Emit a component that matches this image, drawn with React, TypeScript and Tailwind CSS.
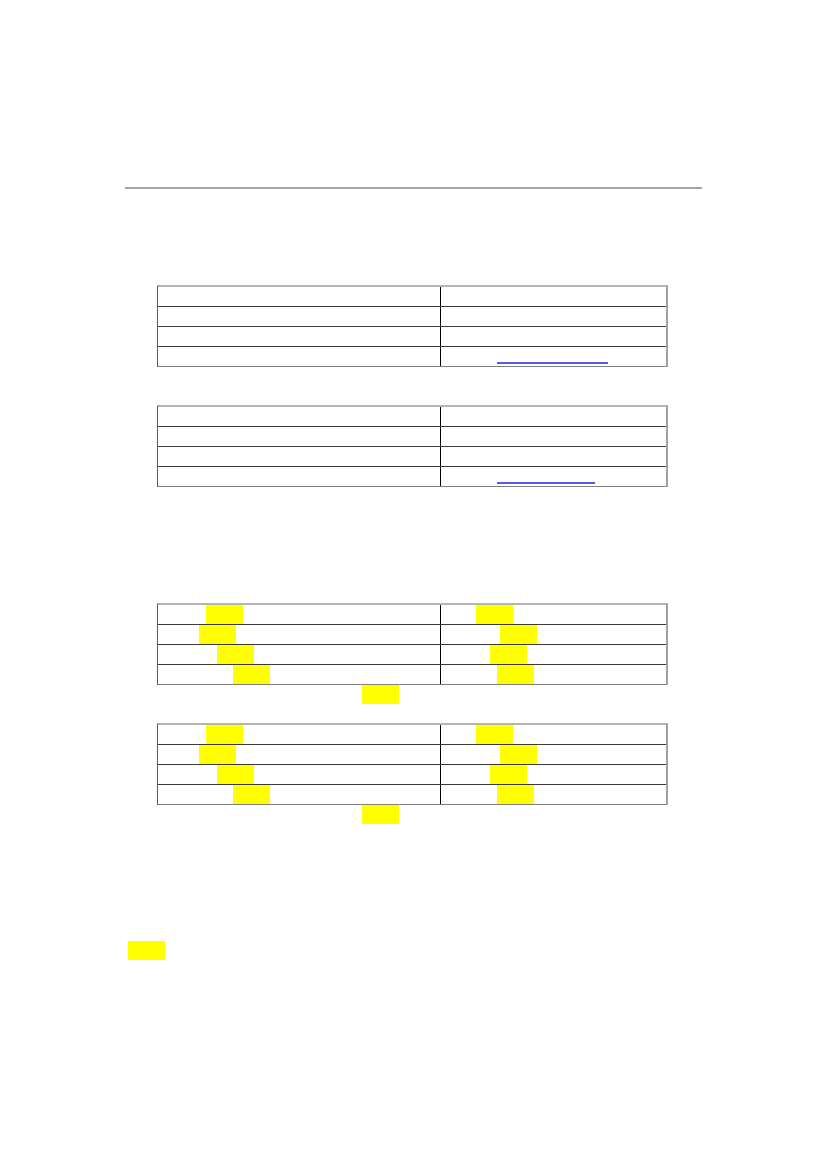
import React from "react";

type Row = { l?: number; r?: number; link?: number };

function Table({ rows }: { rows: Row[] }) {
  return (
    <div className="w-[511px] border-t-2 border-t-[#b4b4b4] border-l border-l-[#5a5a5a] border-r-2 border-r-[#a0a0a0]">
      {rows.map((row, i) => (
        <div
          key={i}
          className={
            "flex h-[20px] border-b " +
            (i < rows.length - 1 ? "border-b-[#3a3a3a]" : "border-b-[#808080]")
          }
        >
          <div className="flex w-[283px] border-r border-r-black">
            {row.l !== undefined && (
              <div className="h-full w-[37px] bg-[#ffff00]" style={{ marginLeft: row.l }} />
            )}
          </div>
          <div className="flex flex-1">
            {row.r !== undefined && (
              <div className="h-full w-[37px] bg-[#ffff00]" style={{ marginLeft: row.r }} />
            )}
            {row.link !== undefined && (
              <div
                className="mt-auto mb-[2px] ml-[56px] h-[2px] bg-[#5a5af0]"
                style={{ width: row.link }}
              />
            )}
          </div>
        </div>
      ))}
    </div>
  );
}

export default function App() {
  const hl: Row[] = [
    { l: 48, r: 35 },
    { l: 41, r: 59 },
    { l: 59, r: 49 },
    { l: 75, r: 56 },
  ];
  return (
    <div className="min-h-[1169px] w-[826px] bg-white font-['Liberation_Sans',sans-serif]">
      <div className="h-[187px]" />
      <div className="ml-[125px] h-[2px] w-[577px] bg-[#a4a4a4]" />
      <div className="ml-[157px]">
        <div className="h-[96px]" />
        <Table rows={[{}, {}, {}, { link: 111 }]} />
        <div className="h-[38px]" />
        <Table rows={[{}, {}, {}, { link: 98 }]} />
        <div className="h-[116px]" />
        <Table rows={hl} />
        <div className="ml-[205px] h-[19px] w-[37px] bg-[#ffff00]" />
        <div className="h-[19px]" />
        <Table rows={hl} />
        <div className="ml-[205px] h-[19px] w-[37px] bg-[#ffff00]" />
      </div>
      <div className="h-[117px]" />
      <div className="ml-[128px] h-[19px] w-[37px] bg-[#ffff00]" />
    </div>
  );
}
